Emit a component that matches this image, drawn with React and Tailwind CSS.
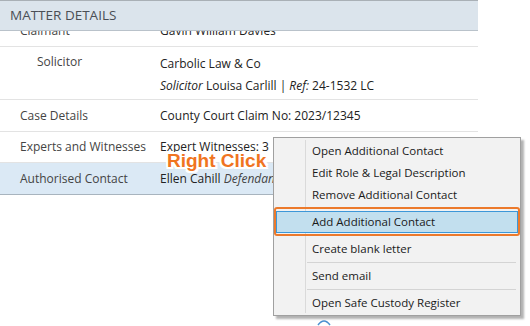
import React from "react";

const font = { fontFamily: '"Open Sans", "Noto Sans", sans-serif' };

const Row = ({ label, children, indent, className = "" }) => (
  <div className={`flex border-b border-[#e3e3e3] ${className}`}>
    <div className={`w-[160px] shrink-0 text-[#444] ${indent ? "pl-[37px]" : "pl-[20px]"}`}>{label}</div>
    <div className="flex-1 text-[#222] whitespace-nowrap">{children}</div>
  </div>
);

const MenuItem = ({ children }) => (
  <div className="h-[22px] flex items-center pl-[38px] text-[#1a1a1a]">{children}</div>
);

const Sep = () => <div className="ml-[33px] mr-[4px] my-[2px] h-px bg-[#d4d4d4]" />;

const outline =
  "2px 0 0 #fff, -2px 0 0 #fff, 0 2px 0 #fff, 0 -2px 0 #fff, 1px 1px 0 #fff, -1px -1px 0 #fff, 1px -1px 0 #fff, -1px 1px 0 #fff, 2px 2px 0 #fff, -2px -2px 0 #fff, 2px -2px 0 #fff, -2px 2px 0 #fff";

export default function App() {
  return (
    <div className="relative w-[530px] h-[326px] bg-white overflow-hidden text-[12px]" style={font}>
      <div className="w-[478px]">
        <div className="h-[31px] border-t border-[#a9b0b6] border-b border-b-[#b9c2ca] bg-[#dbe4ec] flex items-center pl-[10px] text-[13.5px] text-[#4a4f55]">
          MATTER DETAILS
        </div>
        <div className="h-[295px] overflow-hidden">
          <div className="-mt-[15px]">
            <Row label="Claimant" className="h-[31px] items-center">Gavin William Davies</Row>
            <Row label="Solicitor" indent className="h-[53px] pt-[6px]">
              <div className="leading-[22px]">Carbolic Law &amp; Co</div>
              <div className="leading-[22px]">
                <i>Solicitor</i> Louisa Carlill | <i>Ref:</i> 24-1532 LC
              </div>
            </Row>
            <Row label="Case Details" className="h-[32px] items-center">County Court Claim No: 2023/12345</Row>
            <Row label="Experts and Witnesses" className="h-[31px] items-center">Expert Witnesses: 3</Row>
            <Row label="Authorised Contact" className="h-[32px] items-center bg-[#dbe9f5] border-b-[#a8b4be]">
              <span>
                Ellen Cahill <i className="text-[#444]">Defendant</i>
              </span>
            </Row>
          </div>
        </div>
      </div>

      {/* annotation */}
      <div
        className="absolute left-[167px] top-[151px] text-[19px] font-bold text-[#f07421] leading-none"
        style={{ fontFamily: '"Liberation Sans", Arial, sans-serif', textShadow: outline }}
      >
        Right Click
      </div>

      {/* blue arc behind menu */}
      <svg className="absolute left-[316px] top-[317px]" width="16" height="9" viewBox="0 0 16 9">
        <path d="M2 8 Q8 0 14 8" fill="none" stroke="#4a8fd0" strokeWidth="1.5" />
      </svg>

      {/* context menu */}
      <div className="absolute left-[273px] top-[137px] w-[248px] h-[179px] bg-[#f2f2f2] border border-[#a0a0a0] shadow-[3px_3px_2px_rgba(0,0,0,0.3)] pt-[2px] text-[11.5px]">
        <div className="absolute left-[31px] top-[2px] bottom-[2px] w-px bg-[#dadada]" />
        <MenuItem>Open Additional Contact</MenuItem>
        <MenuItem>Edit Role &amp; Legal Description</MenuItem>
        <MenuItem>Remove Additional Contact</MenuItem>
        <Sep />
        <div className="relative mx-[2px]">
          <div className="h-[22px] flex items-center pl-[35px] bg-[#c2dfee] border border-[#3d97d8] text-[#1a1a1a]">
            Add Additional Contact
          </div>
          <div className="absolute -left-[2px] -right-[2px] -top-[4px] -bottom-[3px] border-2 border-[#ec7a2c] rounded-[3px]" />
        </div>
        <Sep />
        <MenuItem>Create blank letter</MenuItem>
        <Sep />
        <MenuItem>Send email</MenuItem>
        <Sep />
        <MenuItem>Open Safe Custody Register</MenuItem>
      </div>
    </div>
  );
}
